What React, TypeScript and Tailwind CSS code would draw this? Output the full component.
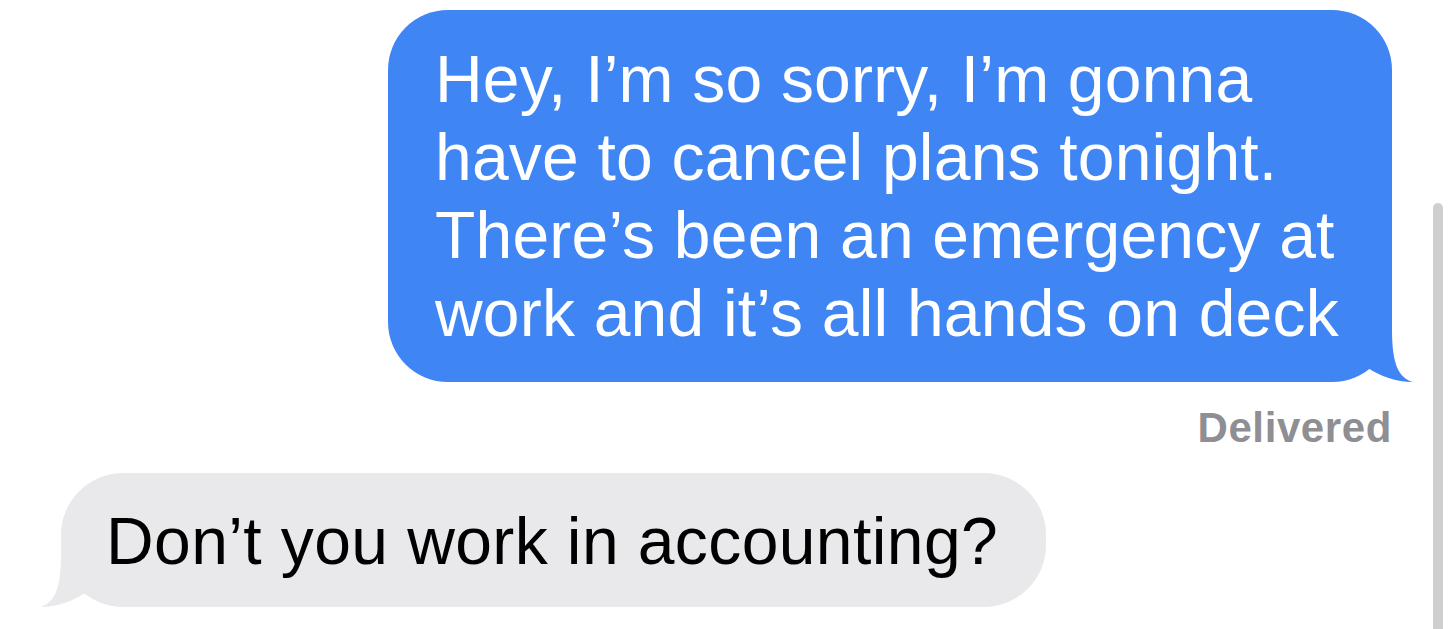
import React from "react";

const Tail: React.FC<{ color: string; flip?: boolean }> = ({ color, flip }) => (
  <svg
    width="94"
    height="68"
    viewBox="0 0 94 68"
    className={`absolute bottom-[-1px] ${flip ? "left-[-22px] -scale-x-100" : "right-[-22px]"}`}
  >
    <path
      d="M72 0 L72 15 C72 50 79 63 93 67 C76 67 60 61 48 53 C38 61 25 66 0 67 L0 0 Z"
      fill={color}
    />
  </svg>
);

export default function App() {
  return (
    <div
      className="relative h-[629px] w-full overflow-hidden bg-white"
      style={{ fontFamily: '"Liberation Sans", Arial, sans-serif' }}
    >
      <div className="flex flex-col">
        {/* outgoing */}
        <div className="flex justify-end pr-[64px] pt-[10px]">
          <div className="relative w-[1004px] rounded-[60px] bg-[#3f85f4] pl-[47px] pt-[30px] pb-[30px] text-[66px] leading-[78px] tracking-[0.2px] text-white">
            <div className="relative z-10 whitespace-nowrap">
              <div>Hey, I’m so sorry, I’m gonna</div>
              <div>have to cancel plans tonight.</div>
              <div>There’s been an emergency at</div>
              <div>work and it’s all hands on deck</div>
            </div>
            <Tail color="#3f85f4" />
          </div>
        </div>
        <div className="mt-[25px] flex justify-end pr-[64px]">
          <span className="text-[42px] font-bold leading-none tracking-[0.6px] text-[#8e8e93]">Delivered</span>
        </div>

        {/* incoming */}
        <div className="mt-[24px] flex pl-[61px]">
          <div className="relative rounded-[62px] bg-[#e9e9eb] pl-[45px] pr-[48px] pt-[29px] pb-[27px] text-[66px] leading-[78px] tracking-[0.4px] text-black">
            <div className="relative z-10 whitespace-nowrap">Don’t you work in accounting?</div>
            <Tail color="#e9e9eb" flip />
          </div>
        </div>
      </div>

      {/* scroll indicator */}
      <div className="absolute left-[1433px] top-[203px] h-[440px] w-[10px] rounded-full bg-[#cfcfcf]" />
    </div>
  );
}
